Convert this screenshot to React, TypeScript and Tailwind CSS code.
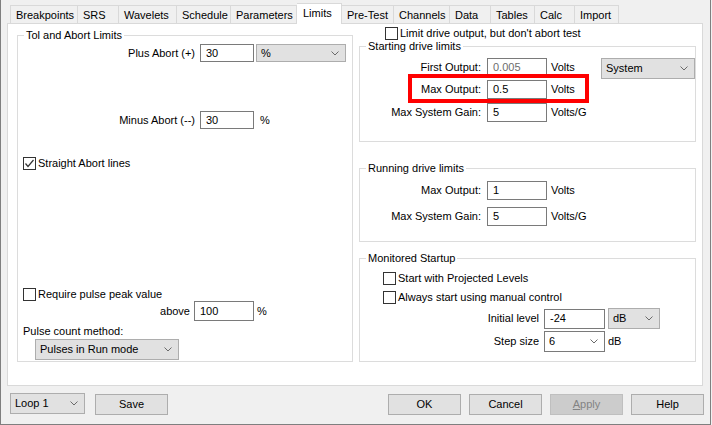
import React from "react";

const Chevron = () => (
  <svg width="8" height="5" viewBox="0 0 8 5" className="shrink-0">
    <polyline points="0.5,0.5 4,4 7.5,0.5" fill="none" stroke="#6a6a6a" strokeWidth="1" />
  </svg>
);

const Field = ({ value, className = "", dim = false }: { value: string; className?: string; dim?: boolean }) => (
  <div className={`flex shrink-0 items-center border border-[#7a7a7a] bg-white pl-[5px] ${dim ? "text-[#6d6d6d]" : ""} ${className}`}>
    {value}
  </div>
);

const Combo = ({ value, className = "", editable = false }: { value: string; className?: string; editable?: boolean }) => (
  <div
    className={`flex shrink-0 items-center justify-between pl-[4px] pr-[6px] ${
      editable ? "border border-[#7a7a7a] bg-white" : "border border-[#adadad] bg-[#e1e1e1]"
    } ${className}`}
  >
    <span>{value}</span>
    <Chevron />
  </div>
);

const Check = ({ label, checked = false }: { label: string; checked?: boolean }) => (
  <div className="flex h-[13px] items-center gap-[2px]">
    <div className="flex h-[13px] w-[13px] shrink-0 items-center justify-center border border-[#333333] bg-white">
      {checked && (
        <svg width="11" height="11" viewBox="0 0 11 11">
          <polyline points="1.5,5.5 4,8.5 9.5,2" fill="none" stroke="#333333" strokeWidth="1.2" />
        </svg>
      )}
    </div>
    <span>{label}</span>
  </div>
);

const Group = ({ title, className = "", children }: { title: string; className?: string; children?: React.ReactNode }) => (
  <div className={`relative flex shrink-0 flex-col border border-[#dcdcdc] ${className}`}>
    <span className="absolute left-[6px] top-[-7px] bg-white px-[2px]">{title}</span>
    {children}
  </div>
);

const Button = ({ label, className = "" }: { label: React.ReactNode; className?: string }) => (
  <div className={`flex h-[21px] w-[73px] shrink-0 items-center justify-center border ${className}`}>{label}</div>
);

const tabs = [
  { label: "Breakpoints", w: "w-[68px] border-l" },
  { label: "SRS", w: "w-[41px]" },
  { label: "Wavelets", w: "w-[58px]" },
  { label: "Schedule", w: "w-[54px]" },
  { label: "Parameters", w: "w-[66px]" },
  { label: "Limits", w: "w-[45px]", active: true },
  { label: "Pre-Test", w: "w-[52px]" },
  { label: "Channels", w: "w-[56px]" },
  { label: "Data", w: "w-[41px]" },
  { label: "Tables", w: "w-[44px]" },
  { label: "Calc", w: "w-[40px]" },
  { label: "Import", w: "w-[44px]" },
];

export default function App() {
  return (
    <div className="h-[425px] w-[712px] bg-[#f0f0f0]">
      <div className="flex h-[425px] w-[711px] flex-col border-b border-l border-r border-[#7f7f7f] font-['Liberation_Sans',Arial,sans-serif] text-[11px] leading-[13px] text-black">
        {/* tab strip */}
        <div className="flex h-[23px] items-end pl-[9px]">
          {tabs.map((t) =>
            t.active ? (
              <div
                key={t.label}
                className={`relative z-10 -mb-px h-[21px] border-r border-t border-[#d9d9d9] bg-white pl-[6px] pt-[3px] ${t.w}`}
              >
                {t.label}
              </div>
            ) : (
              <div key={t.label} className={`h-[18px] border-r border-t border-[#d9d9d9] pl-[5px] pt-[3px] ${t.w}`}>
                {t.label}
              </div>
            )
          )}
        </div>

        {/* tab page */}
        <div className="ml-[6px] flex h-[363px] w-[696px] items-start border border-[#d9d9d9] bg-white">
          <Group title="Tol and Abort Limits" className="ml-[9px] mt-[11px] h-[327px] w-[336px]">
            <div className="mt-[8px] flex h-[18px] items-center">
              <span className="w-[177px] text-right">Plus Abort (+)</span>
              <Field value="30" className="ml-[5px] h-[18px] w-[54px]" />
              <Combo value="%" className="ml-[2px] h-[18px] w-[90px]" />
            </div>
            <div className="mt-[49px] flex h-[18px] items-center">
              <span className="w-[177px] text-right">Minus Abort (--)</span>
              <Field value="30" className="ml-[5px] h-[18px] w-[54px]" />
              <span className="ml-[6px]">%</span>
            </div>
            <div className="mt-[28px] pl-[5px]">
              <Check label="Straight Abort lines" checked />
            </div>
            <div className="mt-[118px] pl-[5px]">
              <Check label="Require pulse peak value" />
            </div>
            <div className="flex h-[20px] items-center">
              <span className="w-[172px] text-right">above</span>
              <Field value="100" className="ml-[4px] h-[20px] w-[60px]" />
              <span className="ml-[3px]">%</span>
            </div>
            <div className="mt-[4px] pl-[5px]">Pulse count method:</div>
            <Combo value="Pulses in Run mode" className="ml-[17px] mt-[1px] h-[21px] w-[144px]" />
          </Group>

          <div className="ml-[6px] mt-[3px] flex flex-col">
            <div className="pl-[26px]">
              <Check label="Limit drive output, but don't abort test" />
            </div>

            <Group title="Starting drive limits" className="mt-[6px] h-[96px] w-[337px]">
              <div className="mt-[11px] flex items-start">
                <div className="flex h-[19px] items-center">
                  <span className="w-[121px] text-right">First Output:</span>
                  <Field value="0.005" dim className="ml-[6px] h-[19px] w-[60px]" />
                  <span className="ml-[4px] w-[50px]">Volts</span>
                </div>
                <Combo value="System" className="h-[21px] w-[94px]" />
              </div>
              <div className="mt-[1px] flex h-[19px] items-center">
                <span className="w-[121px] text-right">Max Output:</span>
                <Field value="0.5" className="ml-[6px] h-[19px] w-[60px]" />
                <span className="ml-[4px]">Volts</span>
              </div>
              <div className="mt-[4px] flex h-[19px] items-center">
                <span className="w-[121px] text-right">Max System Gain:</span>
                <Field value="5" className="ml-[6px] h-[19px] w-[60px]" />
                <span className="ml-[4px]">Volts/G</span>
              </div>
              <div className="absolute left-[48px] top-[27px] h-[29px] w-[181px] border-4 border-[#ff0000]" />
            </Group>

            <Group title="Running drive limits" className="mt-[26px] h-[74px] w-[337px]">
              <div className="mt-[12px] flex h-[19px] items-center">
                <span className="w-[121px] text-right">Max Output:</span>
                <Field value="1" className="ml-[6px] h-[19px] w-[60px]" />
                <span className="ml-[4px]">Volts</span>
              </div>
              <div className="mt-[7px] flex h-[19px] items-center">
                <span className="w-[121px] text-right">Max System Gain:</span>
                <Field value="5" className="ml-[6px] h-[19px] w-[60px]" />
                <span className="ml-[4px]">Volts/G</span>
              </div>
            </Group>

            <Group title="Monitored Startup" className="mt-[16px] h-[104px] w-[337px]">
              <div className="mt-[13px] pl-[23px]">
                <Check label="Start with Projected Levels" />
              </div>
              <div className="mt-[6px] pl-[23px]">
                <Check label="Always start using manual control" />
              </div>
              <div className="mt-[4px] flex h-[21px] items-center">
                <span className="w-[179px] text-right">Initial level</span>
                <Field value="-24" className="ml-[5px] h-[20px] w-[61px]" />
                <Combo value="dB" className="ml-[3px] h-[21px] w-[52px]" />
              </div>
              <div className="mt-[2px] flex h-[21px] items-center">
                <span className="w-[179px] text-right">Step size</span>
                <Combo value="6" editable className="ml-[5px] h-[21px] w-[61px]" />
                <span className="ml-[3px]">dB</span>
              </div>
            </Group>
          </div>
        </div>

        {/* bottom buttons */}
        <div className="ml-[9px] mt-[7px] flex items-start">
          <Combo value="Loop 1" className="h-[21px] w-[75px]" />
          <Button label="Save" className="ml-[10px] mt-[1px] border-[#adadad] bg-[#e1e1e1]" />
          <div className="ml-[220px] mt-[1px] flex gap-[8px]">
            <Button label="OK" className="border-[#adadad] bg-[#e1e1e1]" />
            <Button label="Cancel" className="border-[#adadad] bg-[#e1e1e1]" />
            <Button
              label={
                <span>
                  <span className="underline">A</span>pply
                </span>
              }
              className="border-[#bfbfbf] bg-[#cccccc] text-[#838383]"
            />
            <Button label="Help" className="border-[#adadad] bg-[#e1e1e1]" />
          </div>
        </div>
      </div>
    </div>
  );
}
